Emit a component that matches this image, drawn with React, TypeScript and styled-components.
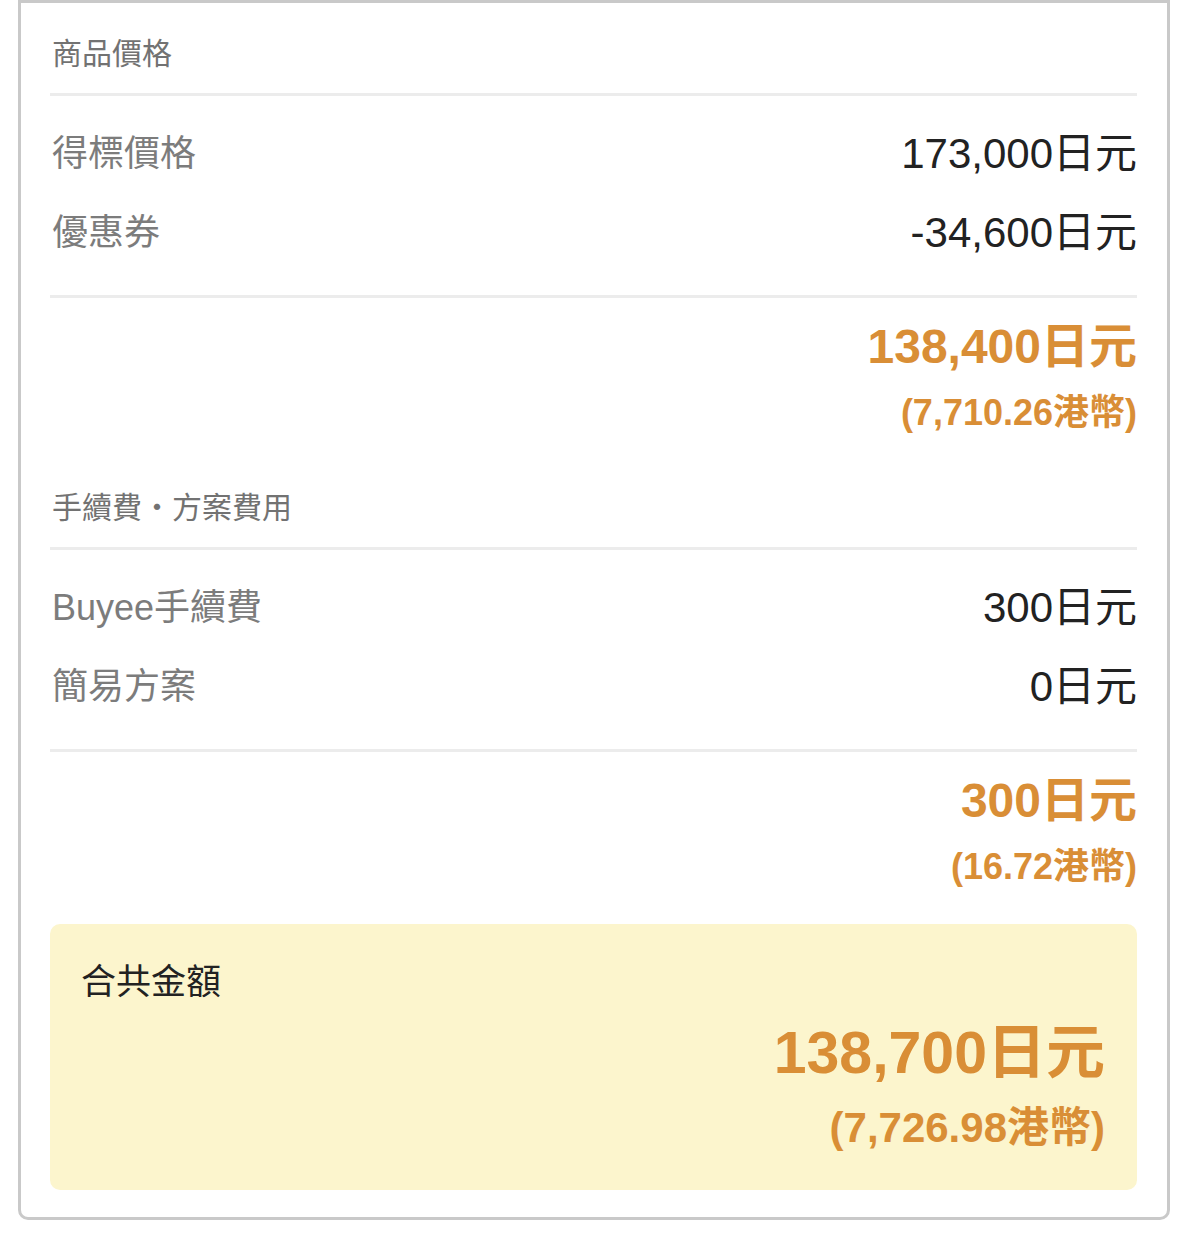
import React from "react";
import styled, { createGlobalStyle } from "styled-components";

const GlobalStyle = createGlobalStyle`
  html, body { margin: 0; padding: 0; background: #ffffff; }
  body { font-family: "Liberation Sans", "Noto Sans CJK TC", sans-serif; }
`;

const Card = styled.div`
  margin: 0 13px 0 18px;
  border: 3px solid #c9c9c9;
  border-radius: 0 0 10px 10px;
  background: #fff;
  padding: 0 30px 27px 29px;
`;

const SectionHeader = styled.div<{ $top: number }>`
  padding: ${(p) => p.$top}px 0 18px 2px;
  font-size: 30px;
  line-height: 42px;
  color: #727272;
  border-bottom: 3px solid #ececec;
`;

const RowList = styled.div`
  padding: 14px 0 27px;
  border-bottom: 3px solid #ececec;
`;

const Row = styled.div`
  display: flex;
  justify-content: space-between;
  align-items: center;
  height: 79px;
`;

const Label = styled.span`
  font-size: 36px;
  color: #7c7c7c;
  padding-left: 2px;
`;

const Value = styled.span`
  font-size: 42px;
  color: #222;
`;

const Summary = styled.div`
  display: flex;
  flex-direction: column;
  align-items: flex-end;
  padding: 19px 0 20px;
`;

const BigAmount = styled.div<{ $size: number; $lh: number }>`
  font-size: ${(p) => p.$size}px;
  line-height: ${(p) => p.$lh}px;
  font-weight: 700;
  color: #d98e36;
`;

const SmallAmount = styled.div<{ $size: number; $lh: number; $gap: number }>`
  margin-top: ${(p) => p.$gap}px;
  font-size: ${(p) => p.$size}px;
  line-height: ${(p) => p.$lh}px;
  font-weight: 700;
  color: #d98e36;
`;

const TotalBox = styled.div`
  margin-top: 13px;
  background: #fcf5cd;
  border-radius: 10px;
  padding: 34px 32px 37px 31px;
  display: flex;
  flex-direction: column;
`;

const TotalLabel = styled.div`
  font-size: 35px;
  line-height: 48px;
  color: #222;
`;

const TotalAmounts = styled.div`
  margin-top: 13px;
  display: flex;
  flex-direction: column;
  align-items: flex-end;
`;

type Item = { label: string; value: string };

const Section: React.FC<{
  title: string;
  top: number;
  items: Item[];
  yen: string;
  hkd: string;
}> = ({ title, top, items, yen, hkd }) => (
  <>
    <SectionHeader $top={top}>{title}</SectionHeader>
    <RowList>
      {items.map((it) => (
        <Row key={it.label}>
          <Label>{it.label}</Label>
          <Value>{it.value}</Value>
        </Row>
      ))}
    </RowList>
    <Summary>
      <BigAmount $size={48} $lh={60}>{yen}</BigAmount>
      <SmallAmount $size={36} $lh={48} $gap={12}>{hkd}</SmallAmount>
    </Summary>
  </>
);

export default function App() {
  return (
    <>
      <GlobalStyle />
      <Card>
        <Section
          title="商品價格"
          top={30}
          items={[
            { label: "得標價格", value: "173,000日元" },
            { label: "優惠券", value: "-34,600日元" },
          ]}
          yen="138,400日元"
          hkd="(7,710.26港幣)"
        />
        <Section
          title="手續費・方案費用"
          top={30}
          items={[
            { label: "Buyee手續費", value: "300日元" },
            { label: "簡易方案", value: "0日元" },
          ]}
          yen="300日元"
          hkd="(16.72港幣)"
        />
        <TotalBox>
          <TotalLabel>合共金額</TotalLabel>
          <TotalAmounts>
            <BigAmount $size={59} $lh={68}>138,700日元</BigAmount>
            <SmallAmount $size={42} $lh={50} $gap={16}>(7,726.98港幣)</SmallAmount>
          </TotalAmounts>
        </TotalBox>
      </Card>
    </>
  );
}
